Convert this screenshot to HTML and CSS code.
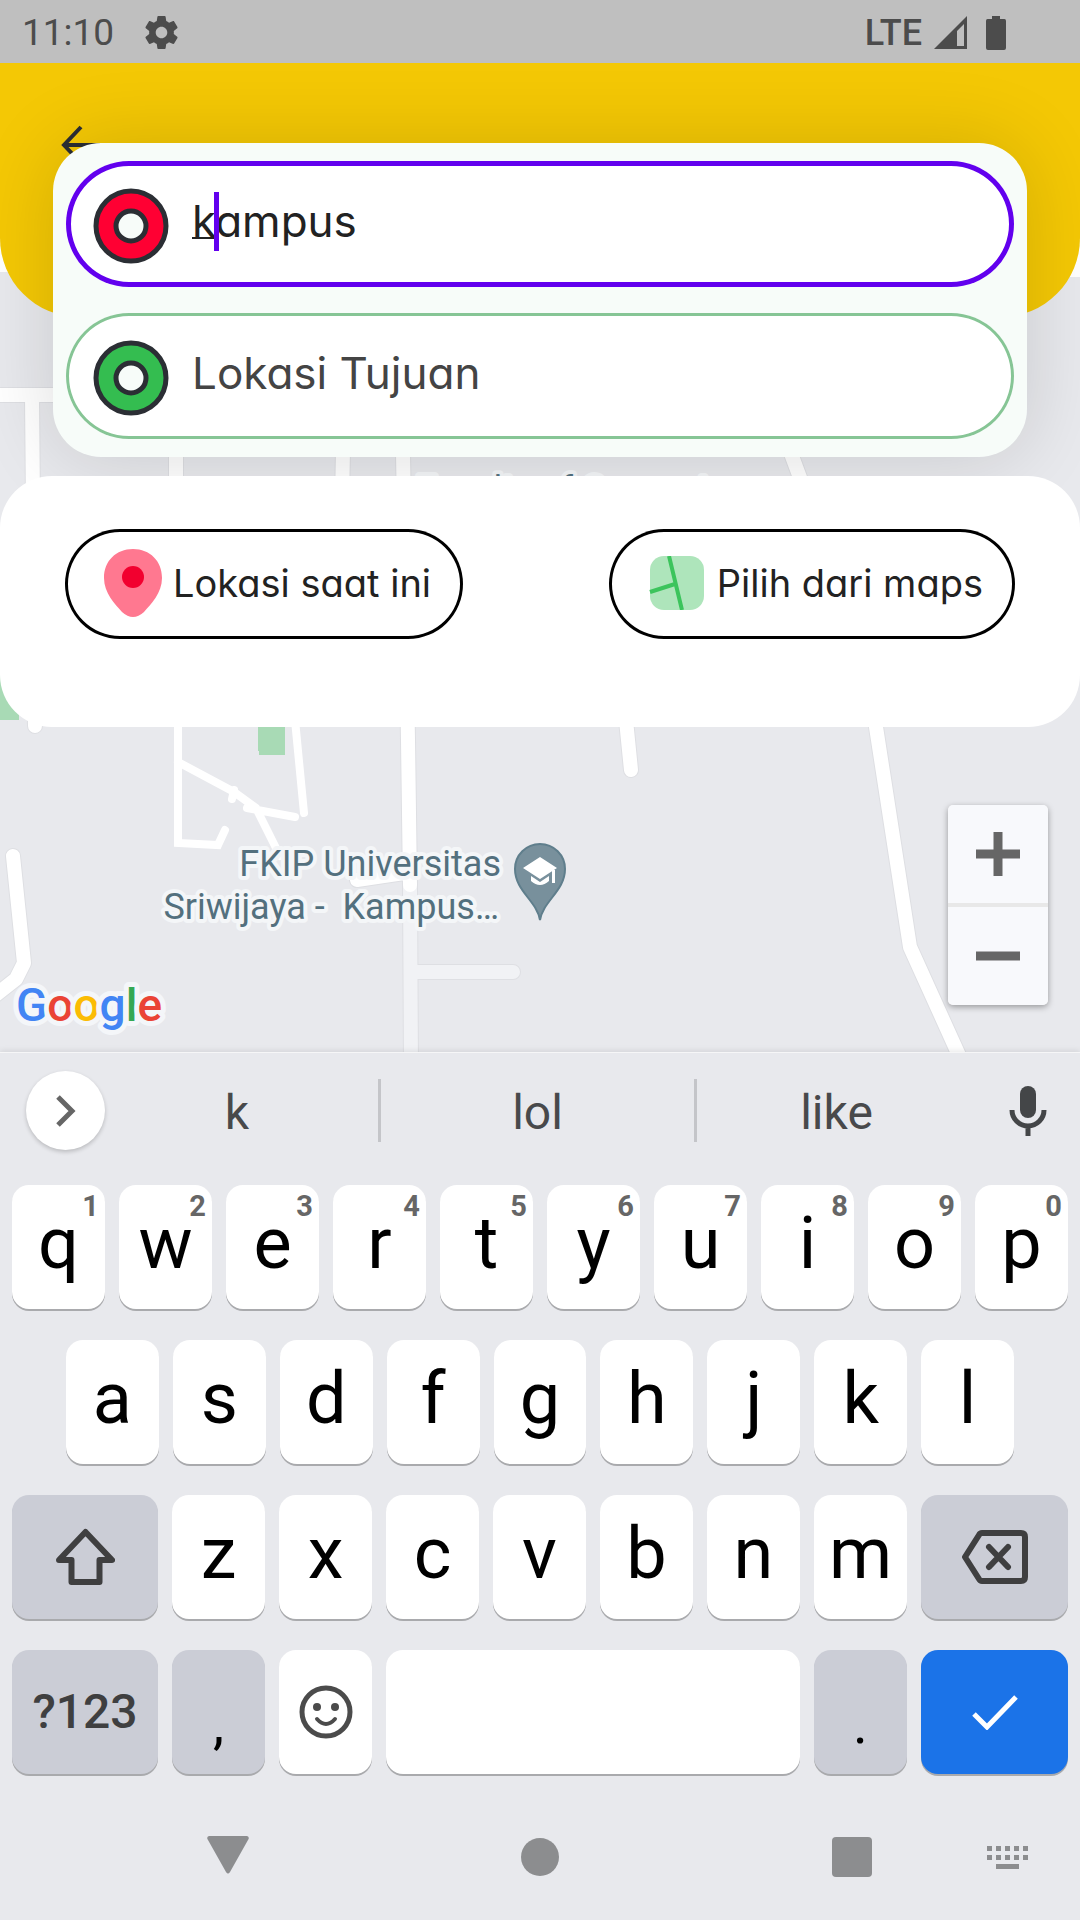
FILE: index.html
```html
<!DOCTYPE html>
<html lang="id">
<head>
<meta charset="utf-8">
<meta name="viewport" content="width=device-width, initial-scale=1">
<title>Pilih Lokasi</title>
<link rel="stylesheet" href="styles.css">
</head>
<body>
<div class="screen">
  <div class="status-bar">
    <span class="clock">11:10</span>
    <svg class="gear" viewBox="2 2 20 20" aria-hidden="true"><path fill="currentColor" d="M19.43 12.98c.04-.32.07-.64.07-.98s-.03-.66-.07-.98l2.11-1.65c.19-.15.24-.42.12-.64l-2-3.46c-.12-.22-.39-.3-.61-.22l-2.49 1c-.52-.4-1.08-.73-1.69-.98l-.38-2.65C14.46 2.18 14.25 2 14 2h-4c-.25 0-.46.18-.49.42l-.38 2.65c-.61.25-1.17.59-1.69.98l-2.49-1c-.23-.09-.49 0-.61.22l-2 3.46c-.13.22-.07.49.12.64l2.11 1.65c-.04.32-.07.65-.07.98s.03.66.07.98l-2.11 1.65c-.19.15-.24.42-.12.64l2 3.46c.12.22.39.3.61.22l2.49-1c.52.4 1.08.73 1.69.98l.38 2.65c.03.24.24.42.49.42h4c.25 0 .46-.18.49-.42l.38-2.65c.61-.25 1.17-.59 1.69-.98l2.49 1c.23.09.49 0 .61-.22l2-3.46c.12-.22.07-.49-.12-.64l-2.11-1.65zM12 15.5c-1.93 0-3.5-1.57-3.5-3.5s1.57-3.5 3.5-3.5 3.5 1.57 3.5 3.5-1.57 3.5-3.5 3.5z"/></svg>
    <span class="network">LTE</span>
    <svg class="signal" viewBox="0 0 33 33" aria-hidden="true"><path fill="currentColor" fill-rule="evenodd" d="M33 0V33H0ZM30 8L23 15V30H30Z"/></svg>
    <svg class="battery" viewBox="0 0 20 34" aria-hidden="true"><path fill="currentColor" d="M6 0H14V3H18.500Q20 3 20 5V32Q20 34 18 34H2Q0 34 0 32V5Q0 3 1.500 3H6Z"/></svg>
  </div>

  <main class="stage">
    <svg class="map" viewBox="0 272 1080 780" preserveAspectRatio="xMidYMin slice" role="img" aria-label="Peta">
      <rect y="272" width="1080" height="780" fill="#e8e9ed"/>
      <path fill="#fff" d="M1000 272h80v5h-80z"/>
      <path fill="#a8dab5" d="M0 660H19V720H0ZM258 715H285V755H259V751H258Z"/>
      <g fill="none" stroke-linejoin="round" stroke-linecap="round">
        <g stroke="#dedfe3" stroke-width="16">
          <path d="M-10 395H400M32 395L35 726M176 400V500M344 400L342 500M402 395L408 740L410 885M786 440L812 510M620 660L631 770M868 670L876 727L910 947L962 1062M13 856L24 963L16 979L-8 998M357 880L404 873"/>
          <path d="M410 885L411 1070M411 972H513"/>
        </g>
        <path stroke="#f1f2f5" stroke-width="14" d="M410 885L411 1070M411 972H513"/>
        <path stroke="#fff" stroke-width="14" d="M-10 395H400M32 395L35 726M176 400V500M344 400L342 500M402 395L408 740L410 885M786 440L812 510M620 660L631 770M868 670L876 727L910 947L962 1062M13 856L24 963L16 979L-8 998M357 880L404 873"/>
        <path stroke="#fff" stroke-width="8" stroke-linejoin="miter" d="M178 700V843L218 845L225 830M178 762L234 792L256 808L280 856M247 808L295 817M234 790L232 799M295 720L304 813"/>
      </g>
      <g class="map-label">
        <text x="416" y="502">Faculty of Computer</text>
        <text x="501" y="876" text-anchor="end">FKIP Universitas</text>
        <text x="499" y="919" text-anchor="end" xml:space="preserve">Sriwijaya -  Kampus…</text>
      </g>
      <path fill="#78909c" stroke="#5f7e8c" stroke-width="2" d="M540 920C537 901 515 891 515 869A25 25 0 0 1 565 869C565 891 543 901 540 920Z"/>
      <path fill="#fff" d="M540 857L557 868L540 879L523 868ZM531 876L540 882L549 876V881Q540 889 531 881ZM552 870H555V883H552Z"/>
      <text class="google" x="16" y="1021"><tspan fill="#4285f4">G</tspan><tspan fill="#ea4335">o</tspan><tspan fill="#fbbc04">o</tspan><tspan fill="#4285f4">g</tspan><tspan fill="#34a853">l</tspan><tspan fill="#ea4335">e</tspan></text>
    </svg>

    <header class="app-bar">
      <button class="back" type="button" aria-label="Kembali">
        <svg viewBox="0 0 48 44" width="48" height="44"><path fill="none" stroke="#2b2e34" stroke-width="4" d="M20 4L3 22L20 40M3 22H46"/></svg>
      </button>
    </header>

    <form class="search-card">
      <label class="field field-active">
        <svg viewBox="0 0 76 76" aria-hidden="true"><circle cx="38" cy="38" r="35" fill="#ff0033" stroke="#2b2e34" stroke-width="5"/><circle cx="38" cy="38" r="15" fill="#f7fcf9" stroke="#2b2e34" stroke-width="5"/></svg>
        <span class="input-wrap">
          <input type="text" value="kampus" aria-label="Lokasi Awal" spellcheck="false">
          <span class="composing"></span>
          <span class="caret"></span>
        </span>
      </label>
      <label class="field">
        <svg viewBox="0 0 76 76" aria-hidden="true"><circle cx="38" cy="38" r="35" fill="#34bd50" stroke="#2b2e34" stroke-width="5"/><circle cx="38" cy="38" r="15" fill="#f7fcf9" stroke="#2b2e34" stroke-width="5"/></svg>
        <span class="input-wrap"><input type="text" placeholder="Lokasi Tujuan" aria-label="Lokasi Tujuan"></span>
      </label>
    </form>

    <section class="panel">
      <button class="pill" type="button">
        <svg viewBox="0 0 58 68" width="58" height="68" aria-hidden="true"><path fill="#ff7890" d="M29 0C46 0 58 12 58 29C58 44 47 55 40 63Q29 73 18 63C11 55 0 44 0 29C0 12 12 0 29 0Z"/><circle cx="29" cy="28" r="11" fill="#f2002f"/></svg>
        <span>Lokasi saat ini</span>
      </button>
      <button class="pill" type="button">
        <svg viewBox="-2 0 58 54" width="58" height="54" aria-hidden="true"><rect width="54" height="54" rx="14" fill="#aee5bb"/><path fill="none" stroke="#3cc45c" stroke-width="4" d="M19 0L32 54M0 36L25 28"/></svg>
        <span>Pilih dari maps</span>
      </button>
    </section>

    <div class="map-controls">
      <div class="zoom">
        <button type="button" aria-label="Perbesar"><svg viewBox="0 0 44 44" width="44" height="44"><path stroke="#666" stroke-width="9" d="M0 22H44M22 0V44"/></svg></button>
        <button type="button" aria-label="Perkecil"><svg viewBox="0 0 44 44" width="44" height="44"><path stroke="#666" stroke-width="9" d="M0 22H44"/></svg></button>
      </div>
    </div>
  </main>

  <section class="keyboard" aria-label="Papan ketik">
    <div class="suggestions">
      <button class="expand" type="button" aria-label="Lainnya"><svg viewBox="0 0 20 32" width="20" height="32"><path fill="none" stroke="#666" stroke-width="5" d="M2 2L16 16L2 30"/></svg></button>
      <button class="word" type="button">k</button>
      <button class="word ruled" type="button">lol</button>
      <button class="word" type="button">like</button>
      <button class="mic" type="button" aria-label="Suara"><svg viewBox="0 0 38 50" width="38" height="50"><rect x="11" width="16" height="32" rx="8" fill="#444648"/><path fill="none" stroke="#444648" stroke-width="5" d="M3 24A16 16 0 0 0 35 24M19 40V50"/></svg></button>
    </div>

    <div class="keys">
      <div class="row">
        <button class="key" type="button">q<sup>1</sup></button>
        <button class="key" type="button">w<sup>2</sup></button>
        <button class="key" type="button">e<sup>3</sup></button>
        <button class="key" type="button">r<sup>4</sup></button>
        <button class="key" type="button">t<sup>5</sup></button>
        <button class="key" type="button">y<sup>6</sup></button>
        <button class="key" type="button">u<sup>7</sup></button>
        <button class="key" type="button">i<sup>8</sup></button>
        <button class="key" type="button">o<sup>9</sup></button>
        <button class="key" type="button">p<sup>0</sup></button>
      </div>
      <div class="row row-inset">
        <button class="key" type="button">a</button>
        <button class="key" type="button">s</button>
        <button class="key" type="button">d</button>
        <button class="key" type="button">f</button>
        <button class="key" type="button">g</button>
        <button class="key" type="button">h</button>
        <button class="key" type="button">j</button>
        <button class="key" type="button">k</button>
        <button class="key" type="button">l</button>
      </div>
      <div class="row row-shift">
        <button class="key key-dark" type="button" aria-label="Shift"><svg viewBox="0 0 59 58" width="59" height="58"><path fill="none" stroke="#3f3f40" stroke-width="6" stroke-linejoin="round" d="M29.500 4L56 32H43.500V54H15.500V32H3Z"/></svg></button>
        <button class="key" type="button">z</button>
        <button class="key" type="button">x</button>
        <button class="key" type="button">c</button>
        <button class="key" type="button">v</button>
        <button class="key" type="button">b</button>
        <button class="key" type="button">n</button>
        <button class="key" type="button">m</button>
        <button class="key key-dark" type="button" aria-label="Hapus"><svg viewBox="0 0 67 54" width="67" height="54"><path fill="none" stroke="#3f3f40" stroke-width="6" stroke-linejoin="round" stroke-linecap="round" d="M21 3H60Q64 3 64 7V47Q64 51 60 51H21Q19 51 18 49L4 27L18 5Q19 3 21 3ZM28 17L47 37M47 17L28 37"/></svg></button>
      </div>
      <div class="row row-space">
        <button class="key key-dark key-symbols" type="button">?123</button>
        <button class="key key-dark key-mark" type="button">,</button>
        <button class="key key-icon" type="button" aria-label="Emoji"><svg viewBox="0 0 54 54" width="54" height="54"><circle cx="27" cy="27" r="24" fill="none" stroke="#4b4b4b" stroke-width="5"/><circle cx="18" cy="22" r="4" fill="#4b4b4b"/><circle cx="36" cy="22" r="4" fill="#4b4b4b"/><path fill="none" stroke="#4b4b4b" stroke-width="4" stroke-linecap="round" d="M18 34Q27 44 36 34"/></svg></button>
        <button class="key" type="button" aria-label="Spasi"></button>
        <button class="key key-dark key-mark" type="button">.</button>
        <button class="key key-enter" type="button" aria-label="Selesai"><svg viewBox="0 0 46 36" width="46" height="36"><path fill="none" stroke="#fff" stroke-width="5" d="M2 20L15 33L44 3"/></svg></button>
      </div>
    </div>

    <nav class="nav-bar">
      <button class="nav-back" type="button" aria-label="Tutup"><svg viewBox="0 0 42 42" width="42" height="42"><path fill="currentColor" d="M2 0H40Q43 1 41 4L23 36Q21 39 19 36L1 4Q-1 1 2 0Z"/></svg></button>
      <button class="nav-home" type="button" aria-label="Beranda"><svg viewBox="0 0 38 38" width="38" height="38"><circle cx="19" cy="19" r="19" fill="currentColor"/></svg></button>
      <button class="nav-recent" type="button" aria-label="Terkini"><svg viewBox="0 0 40 40" width="40" height="40"><rect width="40" height="40" rx="4" fill="currentColor"/></svg></button>
      <button class="switch-ime" type="button" aria-label="Ganti papan ketik"><svg viewBox="0 0 41 23" width="41" height="23"><path fill="currentColor" d="M0 0h5v5H0zM9 0h5v5H9zM18 0h5v5h-5zM27 0h5v5h-5zM36 0h5v5h-5zM0 9h5v5H0zM9 9h5v5H9zM18 9h5v5h-5zM27 9h5v5h-5zM36 9h5v5h-5zM9 18h23v5H9z"/></svg></button>
    </nav>
  </section>
</div>
</body>
</html>
```
FILE: styles.css
```css
* {
  box-sizing: border-box;
}

body {
  margin: 0;
  background: #fff;
  font-family: Roboto, "Liberation Sans", sans-serif;
}

button,
input {
  margin: 0;
  padding: 0;
  border: 0;
  background: none;
  font: inherit;
  color: inherit;
}

svg {
  display: block;
}

.screen {
  display: flex;
  flex-direction: column;
  min-height: 100vh;
}

/* Status bar */
.status-bar {
  display: flex;
  align-items: center;
  height: 63px;
  padding: 2px 74px 0 22px;
  background: #bfbfbf;
  color: #4c4c4c;
  font-size: 37px;
}

.gear {
  width: 33px;
  height: 33px;
  margin-left: 31px;
}

.network {
  margin-left: auto;
  font-size: 36px;
  font-weight: 500;
}

.signal {
  width: 33px;
  height: 33px;
  margin-left: 12px;
}

.battery {
  width: 20px;
  height: 34px;
  margin-left: 19px;
}

/* Map stage */
.stage {
  position: relative;
}

.map {
  position: absolute;
  top: 209px;
  left: 0;
  width: 100%;
  height: calc(100% - 209px);
}

.map-label {
  font-size: 36px;
  fill: #53707e;
  stroke: #f4f6f8;
  stroke-width: 8px;
  stroke-linejoin: round;
  paint-order: stroke;
}

.google {
  font-size: 46px;
  font-weight: 500;
  stroke: #f4f6f9;
  stroke-width: 10px;
  stroke-linejoin: round;
  paint-order: stroke;
}

.app-bar {
  position: relative;
  height: 254px;
  padding: 60px 61px;
  border-radius: 0 0 79px 79px;
  background: #f4c805;
}

.search-card {
  position: relative;
  display: flex;
  flex-direction: column;
  gap: 26px;
  margin: -174px 53px 0;
  padding: 18px 13px;
  border-radius: 48px;
  background: #f7fcf9;
  box-shadow: 0 0 80px rgba(0, 0, 0, 0.14);
}

.field {
  display: flex;
  align-items: center;
  gap: 23px;
  height: 126px;
  padding: 4px 40px 0 27px;
  border-radius: 63px;
  background: #fff;
  box-shadow: inset 0 0 0 3px #86c595;
}

.field-active {
  box-shadow: inset 0 0 0 5px #6200ee;
}

.field svg {
  flex: none;
  width: 76px;
  height: 76px;
}

.input-wrap {
  position: relative;
  flex: 1;
}

.input-wrap input {
  display: block;
  width: 100%;
  height: 76px;
  padding-bottom: 10px;
  outline: none;
  color: #222;
  font-family: Inter, sans-serif;
  font-feature-settings: "cv11";
  font-size: 44px;
}

.input-wrap input::placeholder {
  color: #444;
  opacity: 1;
}

.composing {
  position: absolute;
  top: 49px;
  left: 0;
  width: 22px;
  height: 2px;
  background: #222;
}

.caret {
  position: absolute;
  top: 4px;
  left: 22px;
  width: 5px;
  height: 59px;
  background: #6200ee;
}

.panel {
  position: relative;
  display: flex;
  justify-content: space-between;
  margin-top: 19px;
  padding: 53px 65px 88px;
  border-radius: 52px;
  background: #fff;
}

.pill {
  display: flex;
  align-items: center;
  gap: 11px;
  height: 110px;
  padding: 0 32px 3px 39px;
  border-radius: 55px;
  box-shadow: inset 0 0 0 3px #000;
  color: #222;
  font-family: Inter, sans-serif;
  font-feature-settings: "cv11";
  font-size: 38px;
}

.map-controls {
  position: relative;
  display: flex;
  justify-content: flex-end;
  padding: 78px 32px 47px;
}

.zoom {
  display: grid;
  grid-template-rows: 98px 98px;
  gap: 4px;
  width: 100px;
  border-radius: 5px;
  overflow: hidden;
  background: #e8e8e8;
  box-shadow: 0 2px 6px rgba(0, 0, 0, 0.35);
}

.zoom button {
  display: grid;
  place-items: center;
  background: #f8f9fc;
}

/* Keyboard */
.keyboard {
  position: relative;
  flex: 1;
  display: flex;
  flex-direction: column;
  border-top: 1px solid #f6f6f7;
  background: #e8e9ed;
  box-shadow: 0 -1px 6px rgba(0, 0, 0, 0.1);
}

.suggestions {
  display: grid;
  grid-template-columns: 96px 282fr 319fr 279fr 104px;
  align-items: center;
  height: 115px;
  color: #48494b;
  font-size: 48px;
}

.expand {
  display: grid;
  place-items: center;
  width: 79px;
  height: 79px;
  margin-left: 26px;
  border-radius: 50%;
  background: #fff;
  box-shadow: 0 2px 4px rgba(0, 0, 0, 0.2);
}

.word {
  height: 63px;
  padding-top: 4px;
  line-height: 59px;
}

.ruled {
  border: solid #c4c5c9;
  border-width: 0 3px;
}

.mic {
  justify-self: center;
}

.keys {
  display: flex;
  flex-direction: column;
  gap: 31px;
  padding: 17px 12px 0;
}

.row {
  display: grid;
  grid-template-columns: repeat(10, 1fr);
  gap: 14px;
}

.row-inset {
  grid-template-columns: repeat(9, 1fr);
  padding: 0 54px;
}

.row-shift {
  grid-template-columns: 146fr repeat(7, 93fr) 147fr;
}

.row-space {
  grid-template-columns: 146fr 93fr 93fr 414fr 93fr 147fr;
}

.key {
  position: relative;
  display: flex;
  align-items: center;
  justify-content: center;
  height: 124px;
  padding-bottom: 6px;
  border-radius: 17px;
  background: #fff;
  box-shadow: 0 2px 0 #a9aaad;
  color: #000;
  font-size: 72px;
  line-height: 84px;
}

.key sup {
  position: absolute;
  top: 4px;
  right: 6px;
  color: #666;
  font-size: 29px;
  font-weight: 700;
  line-height: 34px;
}

.key-dark {
  padding: 0;
  background: #cbcdd6;
}

.key-icon,
.key-enter {
  padding: 0;
}

.key-symbols {
  color: #3f3f40;
  font-size: 48px;
  font-weight: 500;
}

.key-mark {
  padding-top: 24px;
  font-size: 56px;
}

.key-enter {
  background: #1b73e8;
}

.nav-bar {
  display: grid;
  grid-template-columns: 72px repeat(3, 1fr) 72px;
  align-items: center;
  height: 126px;
  margin-top: auto;
  color: #8c8d8f;
}

.nav-bar button {
  grid-row: 1;
  justify-self: center;
}

.nav-bar .nav-back {
  grid-column: 2;
}

.nav-bar .nav-home {
  grid-column: 3;
}

.nav-bar .nav-recent {
  grid-column: 4;
}

.nav-bar .switch-ime {
  grid-column: 4 / 6;
  justify-self: end;
  margin-right: 52px;
}
```
